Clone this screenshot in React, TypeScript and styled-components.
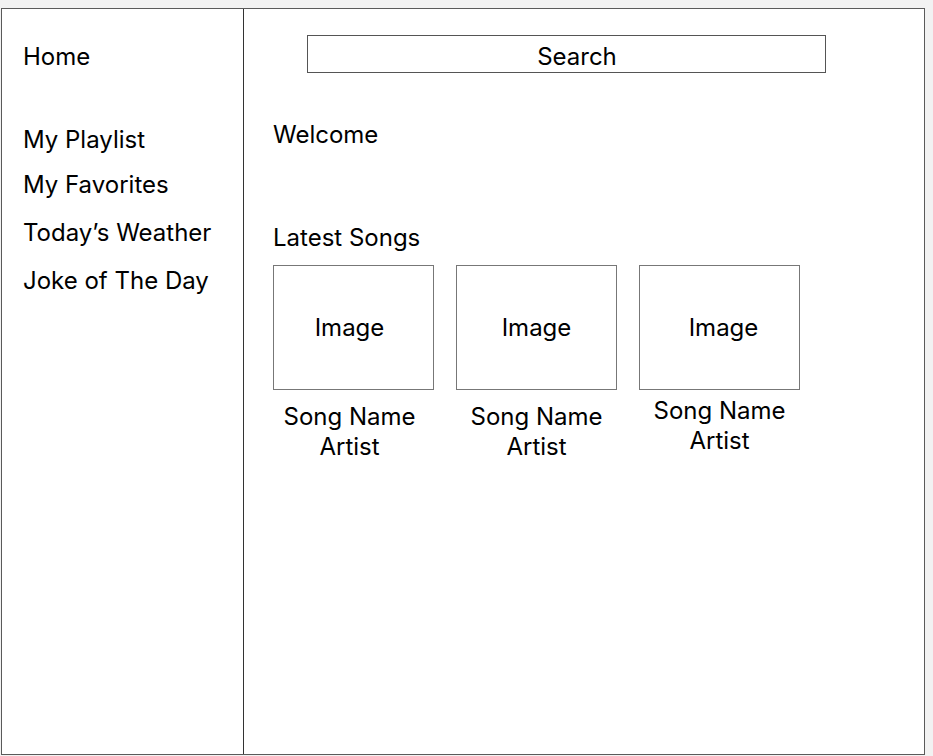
import React from 'react';
import styled, { createGlobalStyle } from 'styled-components';

const GlobalStyle = createGlobalStyle`
  html, body {
    margin: 0;
    padding: 0;
    background: #f2f2f2;
  }
  body {
    padding: 8px 0 0 1px;
    font-family: Inter, "Noto Sans", sans-serif;
    color: #000;
  }
`;

const Frame = styled.div`
  width: 924px;
  height: 747px;
  box-sizing: border-box;
  border: 1px solid #5a5a5a;
  background: #fff;
  display: flex;
`;

const Sidebar = styled.nav`
  width: 242px;
  flex-shrink: 0;
  border-right: 1px solid #333;
  padding: 33px 0 0 21px;
  box-sizing: border-box;
  display: flex;
  flex-direction: column;
`;

const NavItem = styled.div<{ $gap?: number }>`
  font-size: 24px;
  line-height: 30px;
  margin-top: ${({ $gap }) => $gap ?? 0}px;
`;

const Main = styled.main`
  flex: 1;
  padding: 26px 0 0 29px;
  box-sizing: border-box;
  display: flex;
  flex-direction: column;
`;

const SearchBar = styled.div`
  width: 519px;
  height: 38px;
  margin-left: 34px;
  padding: 4px 0 0 21px;
  box-sizing: border-box;
  border: 1px solid #555;
  display: flex;
  align-items: center;
  justify-content: center;
  font-size: 24px;
`;

const Heading = styled.div<{ $gap: number }>`
  font-size: 24px;
  line-height: 30px;
  margin-top: ${({ $gap }) => $gap}px;
`;

const SongRow = styled.div`
  display: flex;
  gap: 22px;
  margin-top: 12px;
`;

const SongCard = styled.div`
  width: 161px;
  display: flex;
  flex-direction: column;
  align-items: center;
`;

const ImageBox = styled.div<{ $shift?: number }>`
  width: 161px;
  height: 125px;
  box-sizing: border-box;
  border: 1px solid #777;
  display: flex;
  align-items: center;
  justify-content: center;
  padding-left: ${({ $shift }) => Math.max(0, ($shift ?? 0) * 2)}px;
  padding-right: ${({ $shift }) => Math.max(0, -($shift ?? 0) * 2)}px;
  font-size: 24px;
`;

const Caption = styled.div<{ $lift?: number; $shift?: number }>`
  margin-top: ${({ $lift }) => 12 - ($lift ?? 0)}px;
  margin-right: ${({ $shift }) => Math.max(0, -($shift ?? 0) * 2)}px;
  font-size: 24px;
  line-height: 30px;
  text-align: center;
`;

const navItems = [
  { label: 'Home', gap: 0 },
  { label: 'My Playlist', gap: 53 },
  { label: 'My Favorites', gap: 15 },
  { label: 'Today\u2019s Weather', gap: 18 },
  { label: 'Joke of The Day', gap: 18 },
];

const songs = [
  { id: 1, lift: 0, imageShift: -4, captionShift: -4 },
  { id: 2, lift: 0, imageShift: 0, captionShift: 0 },
  { id: 3, lift: 6, imageShift: 4, captionShift: 0 },
];

export default function App() {
  return (
    <>
      <GlobalStyle />
      <Frame>
        <Sidebar>
          {navItems.map((item) => (
            <NavItem key={item.label} $gap={item.gap}>
              {item.label}
            </NavItem>
          ))}
        </Sidebar>
        <Main>
          <SearchBar>Search</SearchBar>
          <Heading $gap={47}>Welcome</Heading>
          <Heading $gap={73}>Latest Songs</Heading>
          <SongRow>
            {songs.map((song) => (
              <SongCard key={song.id}>
                <ImageBox $shift={song.imageShift}>Image</ImageBox>
                <Caption $lift={song.lift} $shift={song.captionShift}>
                  Song Name
                  <br />
                  Artist
                </Caption>
              </SongCard>
            ))}
          </SongRow>
        </Main>
      </Frame>
    </>
  );
}
